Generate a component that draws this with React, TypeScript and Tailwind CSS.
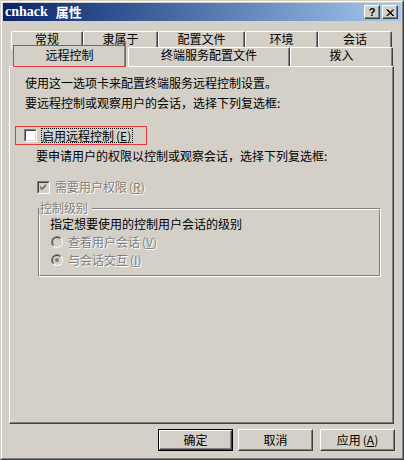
/**
 * Properties dialog — classic Windows "远程控制" tab
 */

const cjk = "font-['Noto_Sans_CJK_SC','Noto_Sans',sans-serif]";
const raised =
  "bg-[#d4d0c8] border border-t-white border-l-white border-r-[#404040] border-b-[#404040] shadow-[inset_-1px_-1px_0_#808080]";
const disabledText = "text-[#808080] [text-shadow:1px_1px_0_#ffffff]";

function Tab({ label, width, selected = false }: { label: string; width: string; selected?: boolean }) {
  return (
    <div
      className={`${width} ${
        selected ? "h-[22px] pt-[2px]" : "h-[19px] mb-px"
      } relative shrink-0 bg-[#d4d0c8] border-t border-l border-r border-t-white border-l-white border-r-[#404040] rounded-t-[2px] shadow-[inset_-1px_0_0_#808080] text-center leading-[14px]`}
    >
      {label}
      {selected && <div className="absolute -top-px -left-px -right-px bottom-0 border border-[#e3393b]" />}
    </div>
  );
}

function Checkbox({ checked = false, disabled = false }: { checked?: boolean; disabled?: boolean }) {
  return (
    <div className="w-[13px] h-[13px] shrink-0 border border-t-[#808080] border-l-[#808080] border-r-white border-b-white">
      <div
        className={`w-full h-full border border-t-[#404040] border-l-[#404040] border-r-[#d4d0c8] border-b-[#d4d0c8] ${
          disabled ? "bg-[#d4d0c8]" : "bg-white"
        }`}
      >
        {checked && (
          <svg width="9" height="9" viewBox="0 0 9 9" className="block">
            <path d="M1 4 L3 6 L7 2 M1 5 L3 7 L7 3 M1 3 L3 5 L7 1" stroke={disabled ? "#808080" : "#000"} strokeWidth="1" fill="none" />
          </svg>
        )}
      </div>
    </div>
  );
}

function Radio({ checked = false }: { checked?: boolean }) {
  return (
    <div className="w-[12px] h-[12px] shrink-0 rounded-full border border-t-[#808080] border-l-[#808080] border-r-white border-b-white">
      <div className="w-full h-full rounded-full border border-t-[#404040] border-l-[#404040] border-r-[#d4d0c8] border-b-[#d4d0c8] bg-[#d4d0c8] flex items-center justify-center">
        {checked && <div className="w-[4px] h-[4px] rounded-full bg-[#808080]" />}
      </div>
    </div>
  );
}

function Hotkey({ k }: { k: string }) {
  return (
    <span className="ml-[2px]">
      (<u>{k}</u>)
    </span>
  );
}

function DialogButton({ children, isDefault = false, className = "" }: { children: React.ReactNode; isDefault?: boolean; className?: string }) {
  if (isDefault) {
    return (
      <div className={`w-[75px] h-[22px] border border-black ${className}`}>
        <div className={`${raised} h-full flex items-center justify-center`}>{children}</div>
      </div>
    );
  }
  return <div className={`${raised} w-[75px] h-[22px] flex items-center justify-center ${className}`}>{children}</div>;
}

export default function App() {
  return (
    <div
      className={`w-[404px] h-[460px] bg-[#d4d0c8] border border-t-[#d4d0c8] border-l-[#d4d0c8] border-r-[#404040] border-b-[#404040] text-[12px] text-black ${cjk}`}
    >
      <div className="h-full border border-t-white border-l-white border-r-[#808080] border-b-[#808080] p-px flex flex-col">
        {/* title bar */}
        <div className="h-[18px] shrink-0 flex items-center bg-linear-to-r from-[#0a246a] to-[#a6caf0] pl-[2px] pr-[3px]">
          <span className="text-white font-bold text-[14px] leading-[14px] font-['Liberation_Serif','Noto_Sans_CJK_SC',serif]">
            cnhack
          </span>
          <span className="ml-[8px] text-white font-bold text-[13px] leading-[14px]">属性</span>
          <div className="ml-auto flex gap-[2px]">
            <div className={`${raised} w-[16px] h-[14px] flex items-center justify-center`}>
              <span className="font-bold text-[11px] leading-none font-['Liberation_Sans',sans-serif]">?</span>
            </div>
            <div className={`${raised} w-[16px] h-[14px] flex items-center justify-center`}>
              <svg width="8" height="7" viewBox="0 0 8 7">
                <path d="M0.5 0.5 L7 7 M1.5 0.5 L8 7 M7 0.5 L0.5 7 M8 0.5 L1.5 7" stroke="#000" strokeWidth="1" />
              </svg>
            </div>
          </div>
        </div>

        {/* tab rows */}
        <div className="mt-[10px] ml-[8px] flex h-[16px]">
          <Tab label="常规" width="w-[72px]" />
          <Tab label="隶属于" width="w-[75px]" />
          <Tab label="配置文件" width="w-[87px]" />
          <Tab label="环境" width="w-[73px]" />
          <Tab label="会话" width="w-[74px]" />
        </div>
        <div className="-mt-[2px] ml-[10px] flex items-end h-[22px] relative z-10">
          <Tab label="远程控制" width="w-[113px]" selected />
          <div className="ml-[2px] flex items-end">
            <Tab label="终端服务配置文件" width="w-[162px]" />
            <Tab label="拨入" width="w-[103px]" />
          </div>
        </div>

        {/* panel */}
        <div className="-mt-px ml-[6px] w-[385px] h-[358px] shrink-0 border border-t-white border-l-white border-r-[#404040] border-b-[#404040] shadow-[inset_-1px_-1px_0_#808080] flex flex-col leading-[14px]">
          <div className="mt-[9px] ml-[15px] h-[14px]">使用这一选项卡来配置终端服务远程控制设置。</div>
          <div className="mt-[6px] ml-[15px] h-[14px]">要远程控制或观察用户的会话，选择下列复选框:</div>

          <div className="mt-[16px] ml-[5px] w-[132px] h-[19px] relative flex items-center pl-[9px]">
            <Checkbox />
            <span className="ml-[4px] border border-dotted border-black pr-px h-[15px] flex items-center">
              启用远程控制
              <Hotkey k="E" />
            </span>
            <div className="absolute inset-0 border border-[#e3393b]" />
          </div>

          <div className="mt-[4px] ml-[26px] h-[14px]">要申请用户的权限以控制或观察会话，选择下列复选框:</div>

          <div className="mt-[17px] ml-[27px] h-[14px] flex items-center">
            <Checkbox checked disabled />
            <span className={`ml-[5px] ${disabledText}`}>
              需要用户权限
              <Hotkey k="R" />
            </span>
          </div>

          {/* group box */}
          <div className="mt-[14px] ml-[28px] w-[343px] h-[69px] relative border border-t-[#808080] border-l-[#808080] border-r-white border-b-white">
            <div className="h-full border border-t-white border-l-white border-r-[#808080] border-b-[#808080] flex flex-col">
              <div className="mt-[7px] ml-[10px] h-[14px]">指定想要使用的控制用户会话的级别</div>
              <div className="mt-[4px] ml-[11px] h-[14px] flex items-center">
                <Radio />
                <span className={`ml-[5px] ${disabledText}`}>
                  查看用户会话
                  <Hotkey k="V" />
                </span>
              </div>
              <div className="mt-[4px] ml-[11px] h-[14px] flex items-center">
                <Radio checked />
                <span className={`ml-[5px] ${disabledText}`}>
                  与会话交互
                  <Hotkey k="I" />
                </span>
              </div>
            </div>
            <div className={`absolute -top-[8px] left-0 pl-px pr-[4px] bg-[#d4d0c8] leading-[14px] ${disabledText}`}>
              控制级别
            </div>
          </div>
        </div>

        {/* buttons */}
        <div className="mt-[5px] ml-[155px] flex">
          <DialogButton isDefault>确定</DialogButton>
          <DialogButton className="ml-[5px]">取消</DialogButton>
          <DialogButton className="ml-[7px]">
            应用
            <Hotkey k="A" />
          </DialogButton>
        </div>
      </div>
    </div>
  );
}
